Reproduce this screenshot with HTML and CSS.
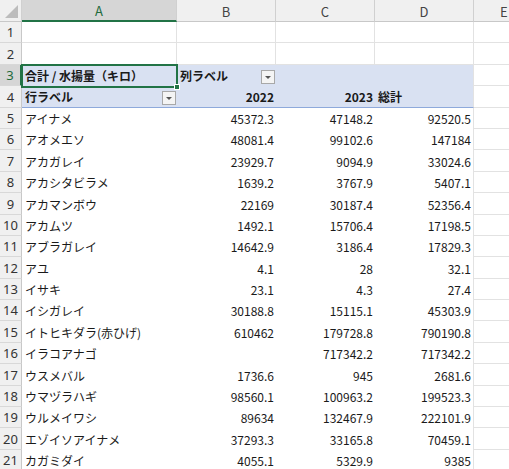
FILE: index.html
```html
<!DOCTYPE html>
<html lang="ja">
<head>
<meta charset="utf-8">
<link rel="stylesheet" href="styles.css">
</head>
<body>
<div class="sheet">
  <div class="grid">
    <div class="corner"><span class="tri"></span></div>
    <div class="ch sel">A</div>
    <div class="ch">B</div>
    <div class="ch">C</div>
    <div class="ch">D</div>
    <div class="ch last">E</div>

    <div class="rh">1</div><div class="c g"></div><div class="c g"></div><div class="c g"></div><div class="c g"></div><div class="c g"></div>
    <div class="rh">2</div><div class="c g"></div><div class="c g"></div><div class="c g"></div><div class="c g"></div><div class="c g"></div>

    <div class="rh rsel">3</div>
    <div class="c p b">合計 / 水揚量（キロ）</div>
    <div class="c p b drop">列ラベル<span class="dd"></span></div>
    <div class="c p"></div>
    <div class="c p pr"></div>
    <div class="c g"></div>

    <div class="rh">4</div>
    <div class="c p b p4 drop">行ラベル<span class="dd"></span></div>
    <div class="c p b p4 n">2022</div>
    <div class="c p b p4 n">2023</div>
    <div class="c p b p4 pr tot">総計</div>
    <div class="c g"></div>
  </div>
  <div class="grid" id="body"></div>
  <div class="selbox"><span class="handle"></span></div>
</div>
<script>
const rows = [
["アイナメ","45372.3","47148.2","92520.5"],
["アオメエソ","48081.4","99102.6","147184"],
["アカガレイ","23929.7","9094.9","33024.6"],
["アカシタビラメ","1639.2","3767.9","5407.1"],
["アカマンボウ","22169","30187.4","52356.4"],
["アカムツ","1492.1","15706.4","17198.5"],
["アブラガレイ","14642.9","3186.4","17829.3"],
["アユ","4.1","28","32.1"],
["イサキ","23.1","4.3","27.4"],
["イシガレイ","30188.8","15115.1","45303.9"],
["イトヒキダラ(赤ひげ)","610462","179728.8","790190.8"],
["イラコアナゴ","","717342.2","717342.2"],
["ウスメバル","1736.6","945","2681.6"],
["ウマヅラハギ","98560.1","100963.2","199523.3"],
["ウルメイワシ","89634","132467.9","222101.9"],
["エゾイソアイナメ","37293.3","33165.8","70459.1"],
["カガミダイ","4055.1","5329.9","9385"]
];
const body = document.getElementById('body');
let html = '';
rows.forEach((r, i) => {
  html += '<div class="rh">' + (i + 5) + '</div>';
  html += '<div class="c d">' + r[0] + '</div>';
  html += '<div class="c d n">' + r[1] + '</div>';
  html += '<div class="c d n">' + r[2] + '</div>';
  html += '<div class="c d n pr">' + r[3] + '</div>';
  html += '<div class="c g"></div>';
});
body.innerHTML = html;
</script>
</body>
</html>
```
FILE: styles.css
```css
* { box-sizing: border-box; }
html, body { margin: 0; padding: 0; background: #fff; overflow: hidden; }
.sheet {
  position: relative;
  width: 509px;
  height: 469px;
  overflow: hidden;
  font-family: "Noto Sans CJK JP", "Noto Sans", sans-serif;
  font-size: 12px;
  color: #1a1a1a;
}
.grid {
  display: grid;
  grid-template-columns: 22px 155px 99px 99px 99px 40px;
  grid-auto-rows: 21.4px;
}
.grid:first-child { grid-template-rows: 22px; }
.corner {
  position: relative;
  background: #f0f0f0;
  border-right: 1px solid #d0d0d0;
  border-bottom: 1px solid #c8c8c8;
}
.tri {
  position: absolute;
  right: 3px;
  bottom: 3px;
  width: 0; height: 0;
  border-left: 13px solid transparent;
  border-bottom: 13px solid #bcbcbc;
}
.ch {
  background: #f0f0f0;
  border-right: 1px solid #d0d0d0;
  border-bottom: 1px solid #c8c8c8;
  display: flex;
  align-items: center;
  justify-content: center;
  font-size: 13px;
  color: #444;
  padding-top: 1px;
}
.ch.sel {
  background: #d6d6d6;
  color: #1e6b3d;
  border-bottom: 2px solid #217346;
}
.ch.last { border-right: none; justify-content: flex-start; padding-left: 26px; }
.rh {
  background: #f0f0f0;
  border-right: 1px solid #c8c8c8;
  border-bottom: 1px solid #d8d8d8;
  display: flex;
  align-items: flex-end;
  justify-content: center;
  font-size: 13px;
  color: #333;
  padding-bottom: 1px;
  font-family: "Noto Sans", "Noto Sans CJK JP", sans-serif;
  line-height: 18px;
}
.rh.rsel {
  background: #d6d6d6;
  color: #1e6b3d;
  border-right: 2px solid #217346;
}
.c {
  display: flex;
  align-items: flex-end;
  padding: 0 2px 1px 3px;
  line-height: 18px;
  white-space: nowrap;
  overflow: visible;
}
.g {
  border-right: 1px solid #e2e2e2;
  border-bottom: 1px solid #e2e2e2;
}
.p { background: #d9e1f2; }
.p4 { border-bottom: 1px solid #8ea9db; }
.pr { border-right: 1px solid #e2e2e2; }
.b { font-weight: bold; }
.n { justify-content: flex-end; }
.tot { padding-left: 3px; }
.d { color: #1a1a1a; }
.drop { position: relative; }
.dd {
  position: absolute;
  right: 1px;
  top: 5px;
  width: 14px;
  height: 14px;
  background: #f4f4f4;
  border: 1px solid #a8a8a8;
}
.dd::after {
  content: "";
  position: absolute;
  left: 3px;
  top: 5px;
  border-left: 3px solid transparent;
  border-right: 3px solid transparent;
  border-top: 3px solid #555;
}
.selbox {
  position: absolute;
  left: 21px;
  top: 64px;
  width: 157px;
  height: 24px;
  border: 2px solid #217346;
  pointer-events: none;
}
.handle {
  position: absolute;
  right: -4px;
  bottom: -4px;
  width: 6px;
  height: 6px;
  background: #217346;
  border: 1px solid #fff;
}
```
